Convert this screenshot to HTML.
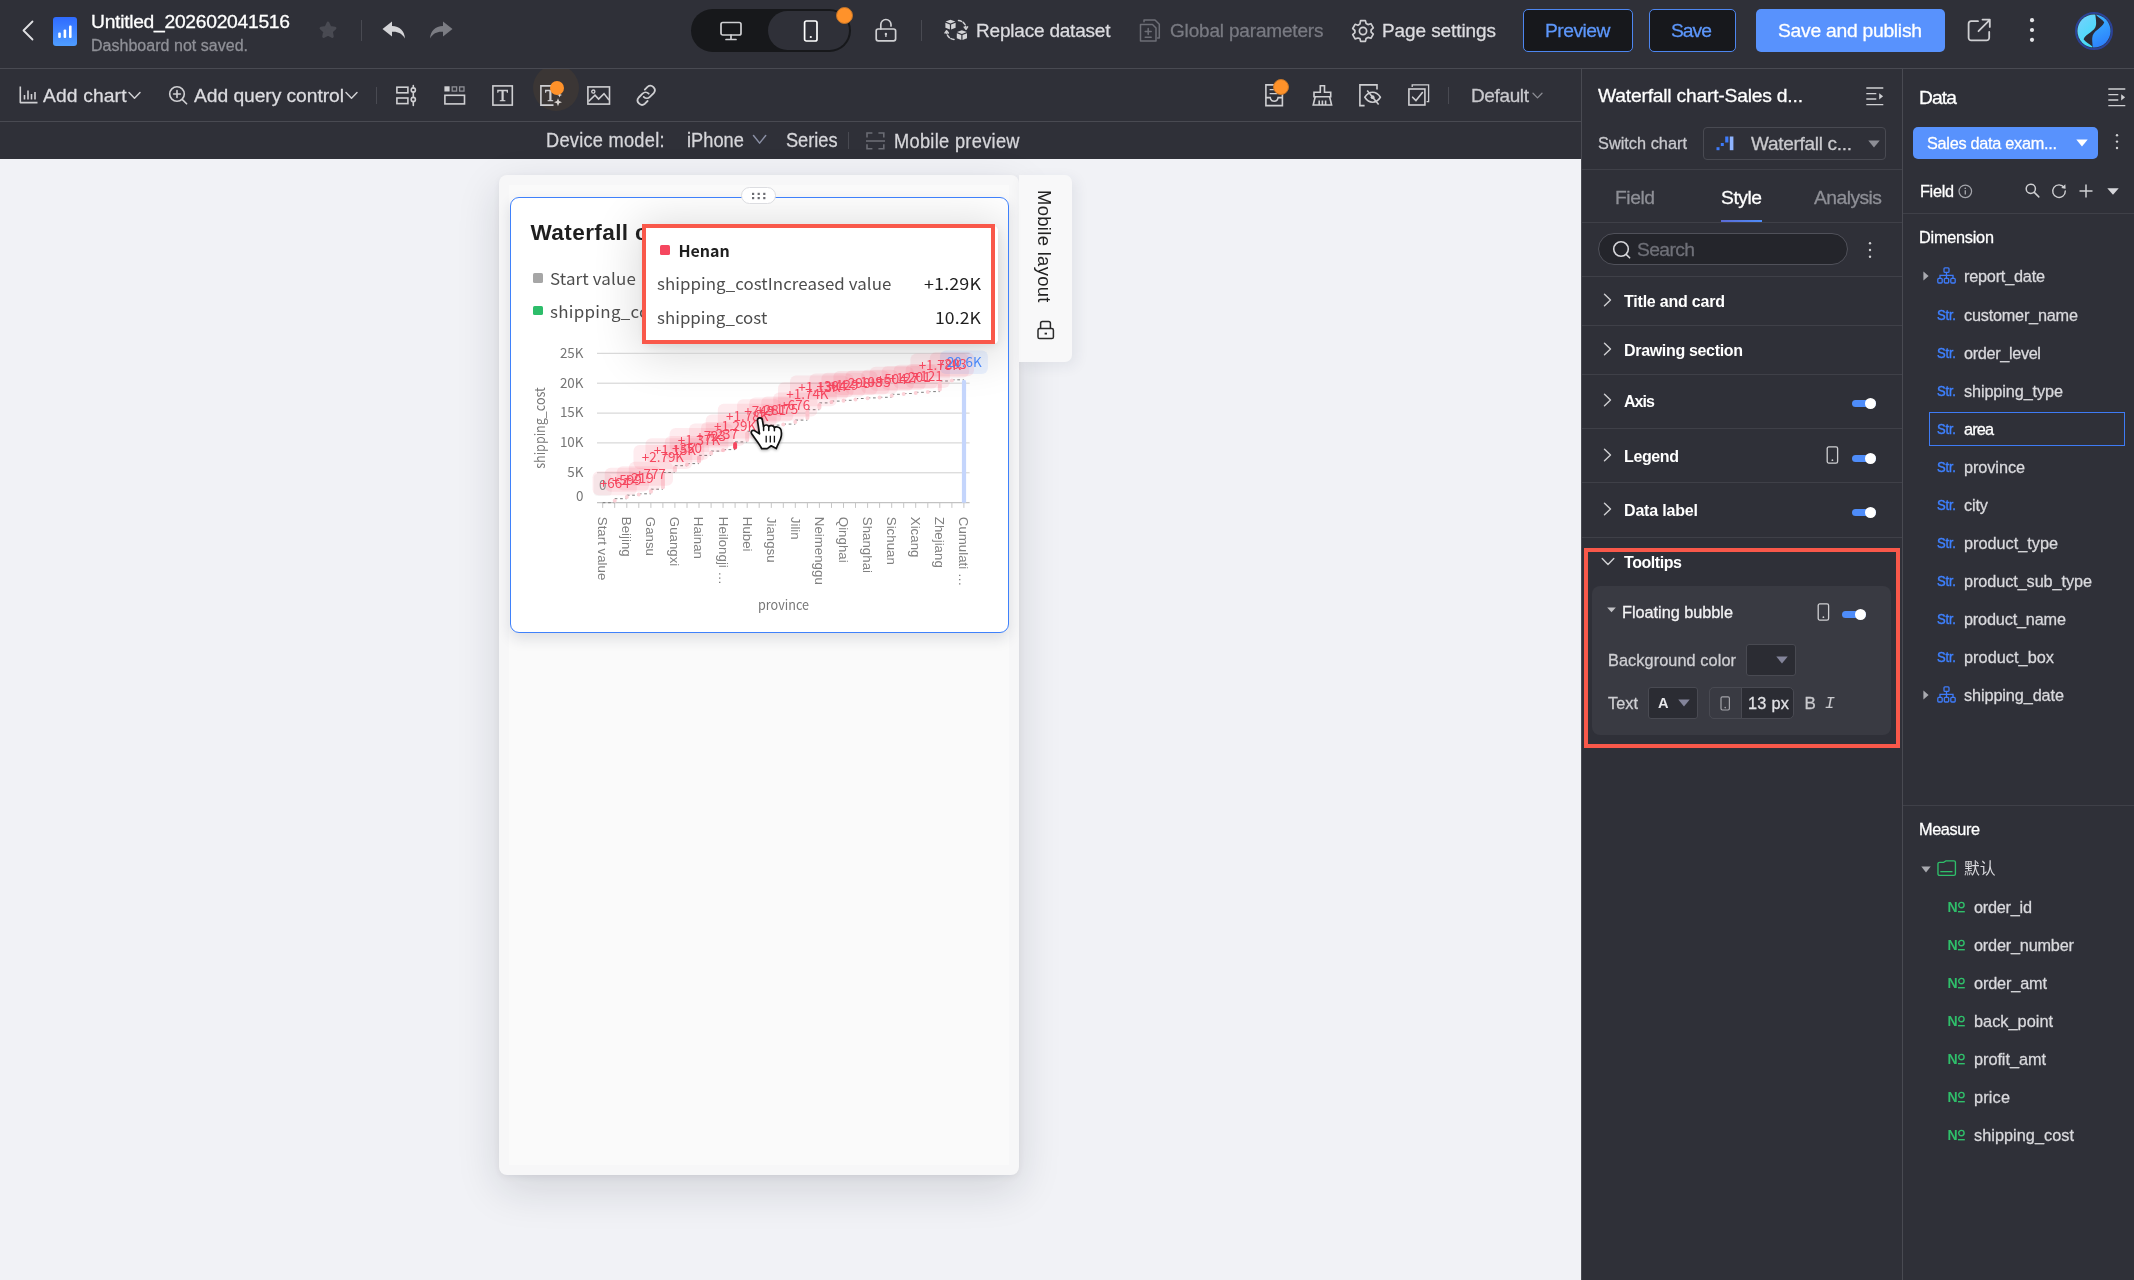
<!DOCTYPE html><html lang="en"><head><meta charset="utf-8"><title>Dashboard editor</title><style>
*{box-sizing:border-box;margin:0;padding:0}
body{opacity:.999}
html,body{width:2134px;height:1280px;overflow:hidden;background:#2f3038;font-family:"Liberation Sans","Noto Sans CJK SC",sans-serif}
.a{position:absolute}
.t{position:absolute;white-space:nowrap;-webkit-text-stroke-width:.28px}
svg{position:absolute;overflow:visible}
.ic{fill:none;stroke:#cfcfd2;stroke-width:1.7;stroke-linecap:round;stroke-linejoin:round}
.hl{position:absolute;height:1px;background:#494a52}
.vl{position:absolute;width:1px;background:#494a52}
.tg{position:absolute;width:24px;height:7px;border-radius:4px;background:#4e8cf9}
.tg:after{content:"";position:absolute;right:0;top:-2px;width:11px;height:11px;border-radius:6px;background:#fff}

</style></head><body>
<div class="a" style="left:0;top:0;width:2134px;height:1280px;background:#2f3038"></div>
<div class="a" style="left:0;top:159px;width:1581px;height:1121px;background:#f1f2f6"></div>
<div class="hl" style="left:0;top:68px;width:2134px"></div>
<div class="hl" style="left:0;top:121px;width:1581px"></div>
<div class="vl" style="left:1581px;top:69px;height:1211px"></div>
<div class="vl" style="left:1902px;top:69px;height:1211px"></div>
<svg style="left:20px;top:18px" width="16" height="26" viewBox="0 0 16 26"><path class="ic" style="stroke:#e0e0e3;stroke-width:1.8" d="M12.5 3.5 L3.5 12.5 L12.5 21.5"/></svg>
<div class="a" style="left:53px;top:17px;width:24px;height:29px;border-radius:3px;background:linear-gradient(180deg,#2f6bff 0%,#4f9dff 100%)"></div>
<svg style="left:53px;top:17px" width="24" height="29" viewBox="0 0 24 29"><g fill="#fff"><rect x="5.2" y="15.5" width="2.6" height="5.5" rx="1"/><rect x="10.6" y="12.5" width="2.6" height="8.5" rx="1"/><rect x="16" y="8.5" width="2.6" height="12.5" rx="1"/></g></svg>
<span class="t" style="left:91px;top:8.7px;font-size:18.431px;line-height:26px;color:#ffffff;letter-spacing:-0.280px;transform-origin:0 50%;transform:scaleX(1.0471);">Untitled_202602041516</span>
<span class="t" style="left:91px;top:34.5px;font-size:16px;line-height:22px;color:#8f9097;letter-spacing:0.024px;">Dashboard not saved.</span>
<svg style="left:318px;top:20px" width="20" height="20" viewBox="0 0 24 24"><path fill="#494a52" d="M12 3.6l2.5 5.4 5.9.8-4.3 4.1 1.1 5.9L12 17l-5.2 2.8 1.1-5.9-4.3-4.1 5.9-.8z" stroke="#494a52" stroke-width="3.4" stroke-linejoin="round"/></svg>
<div class="vl" style="left:361px;top:20px;height:21px"></div>
<svg style="left:381px;top:20px" width="26" height="20" viewBox="0 0 26 20"><path fill="#d4d4d7" d="M11 1.5 L1.5 9 L11 16.5 V11.8 C16.5 11.3 20.8 13.2 24 18.5 C23.4 11 18.8 6.4 11 6.1 Z"/></svg>
<svg style="left:428px;top:20px" width="26" height="20" viewBox="0 0 26 20"><path fill="#7b7c83" d="M15 1.5 L24.5 9 L15 16.5 V11.8 C9.5 11.3 5.2 13.2 2 18.5 C2.6 11 7.2 6.4 15 6.1 Z"/></svg>
<div class="a" style="left:691px;top:9px;width:160px;height:43px;border-radius:22px;background:#17181b"></div>
<div class="a" style="left:768px;top:11px;width:81px;height:39px;border-radius:20px;background:#2f3038"></div>
<svg style="left:720px;top:21px" width="22" height="20" viewBox="0 0 22 20"><rect class="ic" x="1" y="1.5" width="20" height="12.5" rx="1.8"/><path class="ic" d="M11 14v4.2M6 18.5h10"/></svg>
<svg style="left:803px;top:20px" width="16" height="22" viewBox="0 0 16 22"><rect class="ic" style="stroke:#fff" x="1.6" y="1" width="12.4" height="20" rx="1.8"/><circle cx="7.8" cy="17" r="1.1" fill="#fff"/></svg>
<div class="a" style="left:836px;top:7px;width:17px;height:17px;border-radius:9px;background:#ff922a;border:1.5px solid #c27429"></div>
<svg style="left:875px;top:18px" width="22" height="24" viewBox="0 0 22 24"><rect class="ic" x="1.2" y="11" width="19.4" height="11.8" rx="2"/><path class="ic" d="M5.8 11V6.6a5.1 5.1 0 0 1 10.2 0V8"/><circle cx="10.9" cy="16" r="1.2" fill="#cfcfd2"/><path d="M10.9 16v2.4" class="ic" style="stroke-width:1.4"/></svg>
<div class="vl" style="left:921px;top:20px;height:21px"></div>
<svg style="left:945px;top:19px" width="23" height="22" viewBox="0 0 23 22"><g fill="#d4d4d7"><path d="M5.5 0.8 L10.4 2.6 L5.5 4.5 L0.6 2.6Z"/><path d="M0.4 3.8 L4.9 5.6 V10.6 L0.4 8.8Z"/><path d="M6.1 5.6 L10.6 3.8 V8.8 L6.1 10.6Z"/><path d="M16.9 11.2 L21.8 13 L16.9 14.9 L12 13Z"/><path d="M11.8 14.2 L16.3 16 V21 L11.8 19.2Z"/><path d="M17.5 16 L22 14.2 V19.2 L17.5 21Z"/></g><path class="ic" style="stroke-width:1.5;stroke-dasharray:3.2 1.8" d="M13.5 1.5 C18 2 20.8 5 21 9.5"/><path class="ic" style="stroke-width:1.5" d="M19.2 8 L21 10.3 L22.6 7.9"/><path class="ic" style="stroke-width:1.5;stroke-dasharray:3.2 1.8" d="M9 20.5 C4.6 20 1.8 17 1.6 12.6"/><path class="ic" style="stroke-width:1.5" d="M0 14 L1.6 11.8 L3.4 14"/></svg>
<span class="t" style="left:975.5px;top:18.7px;font-size:18.145px;line-height:25px;color:#dcdce0;letter-spacing:-0.182px;transform-origin:0 50%;transform:scaleX(1.0471);">Replace dataset</span>
<svg style="left:1139px;top:18px" width="22" height="24" viewBox="0 0 22 24"><g class="ic" style="stroke:#6d6e76;stroke-width:1.5"><path d="M1.5 6.5 H13.5 L17 10 V23 H1.5Z" style="stroke-linejoin:round"/><path d="M5 3.8V2H16l4.3 4.3V20h-1.8"/><path d="M9.2 10.5v6M6.2 13.5h6M6.2 19.3h6"/></g></svg>
<span class="t" style="left:1169.5px;top:18.7px;font-size:18.145px;line-height:25px;color:#797a82;letter-spacing:-0.157px;transform-origin:0 50%;transform:scaleX(1.0471);">Global parameters</span>
<svg style="left:1351px;top:19px" width="24" height="24" viewBox="0 0 24 24"><g class="ic" style="stroke-width:1.7"><path d="M9.6 2.2h4.8l.7 2.9 1.9 1.1 2.9-.9 2.4 4.2-2.2 2v2.2l2.2 2-2.4 4.2-2.9-.9-1.9 1.1-.7 2.9H9.6l-.7-2.9L7 19.6l-2.9.9-2.4-4.2 2.2-2v-2.2l-2.2-2 2.4-4.2 2.9.9 1.9-1.1z" transform="translate(0 -0.6)"/><circle cx="12" cy="12" r="3.6"/></g></svg>
<span class="t" style="left:1382px;top:18.7px;font-size:18.145px;line-height:25px;color:#dcdce0;letter-spacing:-0.081px;transform-origin:0 50%;transform:scaleX(1.0471);">Page settings</span>
<div class="a" style="left:1523px;top:9px;width:110px;height:43px;border-radius:5px;background:#17181c;border:1px solid #4d86f0"></div>
<span class="t" style="left:1544.5px;top:18.2px;font-size:18.431px;line-height:26px;color:#5d97fb;letter-spacing:-0.496px;transform-origin:0 50%;transform:scaleX(1.0471);">Preview</span>
<div class="a" style="left:1649px;top:9px;width:86.5px;height:43px;border-radius:5px;background:#17181c;border:1px solid #4d86f0"></div>
<span class="t" style="left:1671px;top:18.2px;font-size:18.431px;line-height:26px;color:#5d97fb;letter-spacing:-0.948px;transform-origin:0 50%;transform:scaleX(1.0471);">Save</span>
<div class="a" style="left:1756px;top:9px;width:189px;height:43px;border-radius:5px;background:#5892fd"></div>
<span class="t" style="left:1778px;top:18.2px;font-size:18.431px;line-height:26px;color:#ffffff;letter-spacing:-0.255px;transform-origin:0 50%;transform:scaleX(1.0471);">Save and publish</span>
<svg style="left:1967px;top:18px" width="25" height="24" viewBox="0 0 25 24"><g class="ic" style="stroke-width:1.8"><path d="M11 3.2H4.2a2.6 2.6 0 0 0-2.6 2.6v14a2.6 2.6 0 0 0 2.6 2.6h15.4a2.6 2.6 0 0 0 2.6-2.6V14"/><path d="M11.5 13.2 L22.5 2.2M15.5 1.6h7.3v7.3"/></g></svg>
<svg style="left:2027px;top:16px" width="10" height="28" viewBox="0 0 10 28"><g fill="#e4e4e7"><circle cx="5" cy="4.2" r="2.1"/><circle cx="5" cy="14" r="2.1"/><circle cx="5" cy="23.8" r="2.1"/></g></svg>
<svg style="left:2075px;top:11.5px" width="38" height="38" viewBox="0 0 38 38"><defs><linearGradient id="avl" x1="0" y1="0" x2="0.6" y2="1"><stop offset="0" stop-color="#7fd0ff"/><stop offset="1" stop-color="#3fdcf7"/></linearGradient><linearGradient id="avr" x1="0.3" y1="0" x2="0.6" y2="1"><stop offset="0" stop-color="#3cb8ff"/><stop offset="1" stop-color="#2a78fb"/></linearGradient><clipPath id="avc"><circle cx="19" cy="19" r="16.6"/></clipPath></defs><circle cx="19" cy="19" r="18" fill="#2f3038" stroke="#2b4296" stroke-width="2"/><g clip-path="url(#avc)"><rect x="0" y="0" width="38" height="38" fill="#2b2c36"/><path fill="url(#avl)" d="M20 0 C20.5 5 21.5 9 21 13 C20.5 19.5 10.5 21.5 8.6 27.2 C10 29.5 14 31.5 17.4 34.5 L17 38 H0 V0Z"/><path fill="url(#avr)" d="M20.6 2.2 C24 6.5 28.5 8 29.2 10.6 C27 16.5 17.6 18.5 17.2 26.2 C17 29.5 17.8 33 17.8 38 H38 V0 H20.6Z"/></g></svg>
<svg style="left:19px;top:86px" width="19" height="18" viewBox="0 0 19 18"><g class="ic" style="stroke-width:1.6;stroke-linecap:butt"><path d="M1.3 0.5V16.6H18.5" /><path d="M5.5 13.5v-4.5M9 13.5V4.5M12.5 13.5V8M16 13.5V6"/></g></svg>
<span class="t" style="left:43px;top:83.2px;font-size:18.431px;line-height:26px;color:#dcdce0;letter-spacing:0.111px;transform-origin:0 50%;transform:scaleX(1.0471);">Add chart</span>
<svg style="left:128px;top:91px" width="13" height="9" viewBox="0 0 13 9"><path class="ic" style="stroke-width:1.5" d="M1 1.5l5.5 5.7L12 1.5"/></svg>
<svg style="left:168px;top:85px" width="20" height="20" viewBox="0 0 20 20"><g class="ic" style="stroke-width:1.6"><circle cx="9" cy="9" r="7.3"/><path d="M14.4 14.6L18.6 18.8M9 5.6v6.8M5.6 9h6.8"/></g></svg>
<span class="t" style="left:194px;top:83.2px;font-size:18.431px;line-height:26px;color:#dcdce0;letter-spacing:-0.071px;transform-origin:0 50%;transform:scaleX(1.0471);">Add query control</span>
<svg style="left:345px;top:91px" width="13" height="9" viewBox="0 0 13 9"><path class="ic" style="stroke-width:1.5" d="M1 1.5l5.5 5.7L12 1.5"/></svg>
<div class="vl" style="left:376px;top:87px;height:17px"></div>
<svg style="left:396px;top:85px" width="21" height="21" viewBox="0 0 21 21"><g class="ic" style="stroke-width:1.6;stroke-linejoin:miter"><rect x="0.9" y="2.2" width="11" height="5.6"/><rect x="0.9" y="13" width="11" height="5.6"/><path d="M17.3 0.5V3M17.3 7V12.4M17.3 16.6V20.5"/><circle cx="17.3" cy="5" r="2.1"/><circle cx="17.3" cy="14.5" r="2.1"/></g></svg>
<svg style="left:444px;top:86px" width="22" height="19" viewBox="0 0 22 19"><rect x="0.4" y="0.3" width="5.2" height="5.2" fill="#cfcfd2"/><rect x="8.2" y="0.9" width="4.4" height="4.2" fill="none" stroke="#8e8f95" stroke-width="1.3"/><rect x="15.6" y="0.9" width="4.4" height="4.2" fill="none" stroke="#8e8f95" stroke-width="1.3"/><rect class="ic" style="stroke-width:1.6;stroke-linejoin:miter" x="0.9" y="9.3" width="19.6" height="8.6"/></svg>
<svg style="left:492px;top:85px" width="21" height="21" viewBox="0 0 21 21"><rect class="ic" style="stroke-width:1.6;stroke-linejoin:miter" x="0.9" y="0.9" width="19.4" height="19.2"/><path fill="#cfcfd2" d="M5.2 4.8h10.8v3h-1.1l-.4-1.6h-2.8v8.7l1.7.3v1H7.8v-1l1.7-.3V6.2H6.7l-.4 1.6H5.2z"/></svg>
<div class="a" style="left:533px;top:65px;width:46px;height:46px;border-radius:23px;background:#3b3635;clip-path:inset(4px 0 0 0)"></div>
<svg style="left:540px;top:85px" width="23" height="22" viewBox="0 0 23 22"><path class="ic" style="stroke-width:1.6;stroke-linejoin:miter;stroke-linecap:butt" d="M14 0.9H0.9V20.1H13.5"/><path fill="#cfcfd2" d="M5 4.8h10.8v3h-1.1l-.4-1.6h-2.8v8.7l1.7.3v1H7.6v-1l1.7-.3V6.2H6.5l-.4 1.6H5z"/><path fill="#d9d4d0" d="M18 13.2l1.1 2.9 2.9 1.1-2.9 1.1L18 21.2l-1.1-2.9-2.9-1.1 2.9-1.1zM19.6 7.6l.7 1.7 1.7.7-1.7.7-.7 1.7-.7-1.7-1.7-.7 1.7-.7z"/></svg>
<div class="a" style="left:550px;top:81px;width:13.5px;height:13.5px;border-radius:7px;background:#ff922a"></div>
<svg style="left:587px;top:86px" width="24" height="19" viewBox="0 0 24 19"><g class="ic" style="stroke-width:1.6;stroke-linejoin:miter"><rect x="0.9" y="0.9" width="21.6" height="17.2"/><circle cx="6.3" cy="5.6" r="1.6" style="stroke-width:1.3"/><path d="M1.5 15.5L8 9.2l3.6 3.9L17 7.6l5 6.4" style="stroke-linecap:butt"/></g></svg>
<svg style="left:635px;top:84px" width="23" height="23" viewBox="0 0 23 23"><g class="ic" style="stroke-width:1.8"><path d="M9.8 5.6l2.7-2.7a4.4 4.4 0 0 1 6.2 6.2l-3.8 3.8a4.4 4.4 0 0 1-6.2 0"/><path d="M12.6 17l-2.7 2.7a4.4 4.4 0 0 1-6.2-6.2l3.8-3.8a4.4 4.4 0 0 1 6.2 0" /></g></svg>
<svg style="left:1265px;top:84px" width="19" height="23" viewBox="0 0 19 23"><g class="ic" style="stroke-width:1.6;stroke-linejoin:miter;stroke-linecap:butt"><path d="M0.9 0.9H17.4V21.6H0.9Z"/><path d="M0.9 13.6H5.2C5.6 16 7.2 17.2 9.1 17.2S12.7 16 13.1 13.6H17.4"/><path d="M4.6 5.6h8M4.6 9.6h8" style="stroke-width:1.3"/></g></svg>
<div class="a" style="left:1273px;top:79px;width:16px;height:16px;border-radius:8px;background:#ff922a;border:1.5px solid #c57528"></div>
<svg style="left:1312px;top:85px" width="21" height="21" viewBox="0 0 21 21"><g class="ic" style="stroke-width:1.6;stroke-linejoin:miter;stroke-linecap:butt"><path d="M8.3 0.8h4.2v6.4h6.2v4.6H2v-4.6h6.3z"/><path d="M3.2 11.8L1.2 20h18.4l-2-8.2M7.2 20v-4.6M10.4 20v-4.6M13.6 20v-4.6"/></g></svg>
<svg style="left:1359px;top:84px" width="23" height="23" viewBox="0 0 23 23"><g class="ic" style="stroke-width:1.6;stroke-linejoin:miter;stroke-linecap:butt"><path d="M18 5.4V0.9H0.9V21.6H5.6"/><path d="M5.8 13.2C8 9.8 10.6 8.2 13.6 8.2s5.6 1.6 7.8 5c-2.2 3.4-4.8 5-7.8 5s-5.6-1.6-7.8-5z" style="stroke-linejoin:round"/><circle cx="13.6" cy="13.2" r="1.9" fill="#cfcfd2" stroke="none"/><path d="M8.2 6.6L19.6 20.4"/></g></svg>
<svg style="left:1408px;top:84px" width="22" height="22" viewBox="0 0 22 22"><g class="ic" style="stroke-width:1.6;stroke-linejoin:miter;stroke-linecap:butt"><rect x="0.9" y="5" width="16" height="16"/><path d="M4.2 3V0.9H20.6V17.6H18.6" style="stroke-width:1.3"/><path d="M4.6 13.2l3.4 3.4 6.4-8" style="stroke-linecap:round;stroke-linejoin:round"/></g></svg>
<div class="vl" style="left:1448px;top:87px;height:17px"></div>
<span class="t" style="left:1470.5px;top:83.7px;font-size:18.145px;line-height:25px;color:#c8c8cc;letter-spacing:-0.341px;transform-origin:0 50%;transform:scaleX(1.0471);">Default</span>
<svg style="left:1532px;top:92px" width="11" height="8" viewBox="0 0 11 8"><path class="ic" style="stroke:#8b8c93;stroke-width:1.3" d="M1 1.3l4.5 4.6L10 1.3"/></svg>
<span class="t" style="left:546px;top:127.4px;font-size:19.6px;line-height:27px;color:#d6d6da;letter-spacing:0.272px;transform-origin:0 50%;transform:scaleX(0.93);">Device model:</span>
<span class="t" style="left:687.3px;top:127.4px;font-size:19.6px;line-height:27px;color:#d6d6da;letter-spacing:0.033px;transform-origin:0 50%;transform:scaleX(0.93);">iPhone</span>
<svg style="left:752.4px;top:134.4px" width="16" height="11" viewBox="0 0 16 11"><path class="ic" style="stroke:#8a8fa4;stroke-width:1.5" d="M1.5 1.5l6.1 7.6 6.1-7.6"/></svg>
<span class="t" style="left:786px;top:126.6px;font-size:19.6px;line-height:27px;color:#d6d6da;letter-spacing:-0.034px;transform-origin:0 50%;transform:scaleX(0.93);">Series</span>
<div class="vl" style="left:848px;top:132px;height:17px"></div>
<svg style="left:866px;top:132px" width="19" height="18" viewBox="0 0 19 18"><g class="ic" style="stroke:#6b6c74;stroke-width:1.6;stroke-linecap:butt;stroke-linejoin:miter"><path d="M1 5.6V1H6.4M12.4 1H17.8V5.6M17.8 12.2V16.8H12.4M6.4 16.8H1V12.2"/><path d="M0 9H19"/></g></svg>
<span class="t" style="left:894px;top:128.0px;font-size:19.6px;line-height:27px;color:#d6d6da;letter-spacing:0.328px;transform-origin:0 50%;transform:scaleX(0.93);">Mobile preview</span>
<span class="t" style="left:1598px;top:83.2px;font-size:18.431px;line-height:26px;color:#ffffff;letter-spacing:-0.209px;transform-origin:0 50%;transform:scaleX(1.0471);">Waterfall chart-Sales d...</span>
<svg style="left:1866px;top:87px" width="19" height="18" viewBox="0 0 19 18"><g class="ic" style="stroke-width:1.3;stroke-linecap:butt"><path d="M0.3 1H17.3M0.3 6.6H10.3M0.3 12H10.3M0.3 17.6H17.3"/></g><path fill="#cfcfd2" d="M13.2 6.2l3.9 3.1-3.9 3.1z"/></svg>
<span class="t" style="left:1598px;top:132.0px;font-size:16.3px;line-height:23px;color:#c9c9cd;letter-spacing:0.028px;">Switch chart</span>
<div class="a" style="left:1703px;top:127px;width:183px;height:33px;border-radius:4px;border:1px solid #494a52"></div>
<svg style="left:1716px;top:135px" width="18" height="16" viewBox="0 0 18 16"><rect x="0.5" y="12.2" width="3" height="3" fill="#3e7bfa"/><rect x="4.8" y="8" width="3" height="3" fill="#3e7bfa"/><rect x="9.2" y="1.5" width="3.2" height="6" fill="#3e7bfa"/><rect x="13.8" y="1.5" width="3.6" height="13.7" fill="#8fb4ff"/></svg>
<span class="t" style="left:1751px;top:131.7px;font-size:18.145px;line-height:25px;color:#c9c9cd;letter-spacing:-0.276px;transform-origin:0 50%;transform:scaleX(1.0471);">Waterfall c...</span>
<svg style="left:1868px;top:140px" width="12" height="8" viewBox="0 0 12 8"><path fill="#8d8e96" d="M0.3 0.6h11.4L6 7.4z"/></svg>
<div class="hl" style="left:1582px;top:169px;width:320px;background:#3f4048"></div>
<span class="t" style="left:1615px;top:184.7px;font-size:18.431px;line-height:26px;color:#8e8f96;letter-spacing:-0.434px;transform-origin:0 50%;transform:scaleX(1.0471);">Field</span>
<span class="t" style="left:1721px;top:184.7px;font-size:18.431px;line-height:26px;color:#ffffff;letter-spacing:-0.453px;transform-origin:0 50%;transform:scaleX(1.0471);">Style</span>
<span class="t" style="left:1814px;top:184.7px;font-size:18.431px;line-height:26px;color:#8e8f96;letter-spacing:-0.524px;transform-origin:0 50%;transform:scaleX(1.0471);">Analysis</span>
<div class="a" style="left:1721px;top:220px;width:41px;height:2.5px;background:linear-gradient(90deg,#5b6bd6,#4e8cf9)"></div>
<div class="hl" style="left:1582px;top:222px;width:320px;background:#3f4048"></div>
<div class="a" style="left:1598px;top:233px;width:250px;height:32px;border-radius:16px;border:1px solid #50515a;background:#24252b"></div>
<svg style="left:1612px;top:240px" width="20" height="20" viewBox="0 0 20 20"><g class="ic" style="stroke:#d6d6da;stroke-width:1.6"><circle cx="9" cy="9" r="7.3"/><path d="M14.4 14.6L17.6 17.8"/></g></svg>
<span class="t" style="left:1637px;top:236.7px;font-size:18.431px;line-height:26px;color:#6f7078;letter-spacing:-0.597px;transform-origin:0 50%;transform:scaleX(1.0471);">Search</span>
<svg style="left:1867px;top:241px" width="6" height="18" viewBox="0 0 6 18"><g fill="#cfcfd2"><circle cx="3" cy="2.2" r="1.2"/><circle cx="3" cy="9" r="1.2"/><circle cx="3" cy="15.8" r="1.2"/></g></svg>
<div class="hl" style="left:1582px;top:276px;width:320px;background:#3f4048"></div>
<div class="hl" style="left:1582px;top:325px;width:320px;background:#3f4048"></div>
<div class="hl" style="left:1582px;top:374px;width:320px;background:#3f4048"></div>
<div class="hl" style="left:1582px;top:428px;width:320px;background:#3f4048"></div>
<div class="hl" style="left:1582px;top:482px;width:320px;background:#3f4048"></div>
<div class="hl" style="left:1582px;top:537px;width:320px;background:#3f4048"></div>
<svg style="left:1603px;top:293px" width="9" height="14" viewBox="0 0 9 14"><path class="ic" style="stroke-width:1.4" d="M1.5 1.2l6 5.8-6 5.8"/></svg>
<span class="t" style="left:1624px;top:290.8px;font-size:16px;line-height:22px;color:#ffffff;font-weight:700;-webkit-text-stroke-width:0;letter-spacing:-0.210px;">Title and card</span>
<svg style="left:1603px;top:342px" width="9" height="14" viewBox="0 0 9 14"><path class="ic" style="stroke-width:1.4" d="M1.5 1.2l6 5.8-6 5.8"/></svg>
<span class="t" style="left:1624px;top:339.8px;font-size:16px;line-height:22px;color:#ffffff;font-weight:700;-webkit-text-stroke-width:0;letter-spacing:-0.327px;">Drawing section</span>
<svg style="left:1603px;top:393px" width="9" height="14" viewBox="0 0 9 14"><path class="ic" style="stroke-width:1.4" d="M1.5 1.2l6 5.8-6 5.8"/></svg>
<span class="t" style="left:1624px;top:390.8px;font-size:16px;line-height:22px;color:#ffffff;font-weight:700;-webkit-text-stroke-width:0;letter-spacing:-0.932px;">Axis</span>
<div class="tg" style="left:1852px;top:399.5px"></div>
<svg style="left:1603px;top:448px" width="9" height="14" viewBox="0 0 9 14"><path class="ic" style="stroke-width:1.4" d="M1.5 1.2l6 5.8-6 5.8"/></svg>
<span class="t" style="left:1624px;top:445.8px;font-size:16px;line-height:22px;color:#ffffff;font-weight:700;-webkit-text-stroke-width:0;letter-spacing:-0.378px;">Legend</span>
<div class="tg" style="left:1852px;top:454.5px"></div>
<svg style="left:1826px;top:446px" width="13" height="18" viewBox="0 0 13 18"><rect class="ic" style="stroke:#cfcfd2;stroke-width:1.3" x="1.2" y="0.9" width="10.4" height="16.2" rx="1.6"/><circle cx="6.4" cy="14.2" r="0.9" fill="#cfcfd2"/></svg>
<svg style="left:1603px;top:502px" width="9" height="14" viewBox="0 0 9 14"><path class="ic" style="stroke-width:1.4" d="M1.5 1.2l6 5.8-6 5.8"/></svg>
<span class="t" style="left:1624px;top:499.8px;font-size:16px;line-height:22px;color:#ffffff;font-weight:700;-webkit-text-stroke-width:0;letter-spacing:-0.177px;">Data label</span>
<div class="tg" style="left:1852px;top:508.5px"></div>
<div class="a" style="left:1592px;top:586px;width:299px;height:149px;border-radius:8px;background:#393a42"></div>
<svg style="left:1601px;top:557px" width="14" height="9" viewBox="0 0 14 9"><path class="ic" style="stroke-width:1.4" d="M1.2 1.5l5.8 6 5.8-6"/></svg>
<span class="t" style="left:1624px;top:551.8px;font-size:16px;line-height:22px;color:#ffffff;font-weight:700;-webkit-text-stroke-width:0;letter-spacing:-0.433px;">Tooltips</span>
<svg style="left:1607px;top:607px" width="9" height="6" viewBox="0 0 9 6"><path fill="#c2c2c6" d="M0.2 0.5h8.6L4.5 5.2z"/></svg>
<span class="t" style="left:1622px;top:600.5px;font-size:16.3px;line-height:23px;color:#f2f2f4;letter-spacing:-0.025px;">Floating bubble</span>
<svg style="left:1817px;top:603px" width="13" height="18" viewBox="0 0 13 18"><rect class="ic" style="stroke:#cfcfd2;stroke-width:1.3" x="1.2" y="0.9" width="10.4" height="16.2" rx="1.6"/><circle cx="6.4" cy="14.2" r="0.9" fill="#cfcfd2"/></svg>
<div class="tg" style="left:1842px;top:610.7px"></div>
<span class="t" style="left:1608px;top:649.0px;font-size:16.3px;line-height:23px;color:#cfcfd3;letter-spacing:0.085px;">Background color</span>
<div class="a" style="left:1746px;top:644px;width:50px;height:32px;border-radius:3px;border:1px solid #494a52;background:#2b2c33"></div>
<svg style="left:1776px;top:656px" width="12" height="8" viewBox="0 0 12 8"><path fill="#83849a" d="M0.3 0.6h11.4L6 7.4z"/></svg>
<span class="t" style="left:1608px;top:691.5px;font-size:16.3px;line-height:23px;color:#cfcfd3;letter-spacing:0.047px;">Text</span>
<div class="a" style="left:1648px;top:687px;width:50px;height:32px;border-radius:3px;border:1px solid #494a52;background:#2b2c33"></div>
<span class="t" style="left:1658px;top:693.0px;font-size:14.6px;line-height:20px;color:#e8e8eb;font-weight:700;-webkit-text-stroke-width:0;-webkit-text-stroke-width:0;">A</span>
<svg style="left:1678px;top:699px" width="12" height="8" viewBox="0 0 12 8"><path fill="#83849a" d="M0.3 0.6h11.4L6 7.4z"/></svg>
<div class="a" style="left:1709px;top:687px;width:85px;height:32px;border-radius:5px;border:1px solid #494a52;background:#2b2c33"></div>
<div class="a" style="left:1709px;top:687px;width:33px;height:32px;border-radius:5px 0 0 5px;border:1px solid #494a52;background:#393a42"></div>
<svg style="left:1720px;top:696px" width="11" height="15" viewBox="0 0 11 15"><rect class="ic" style="stroke:#a2a2a8;stroke-width:1.2" x="1" y="0.8" width="8.4" height="13.2" rx="1.4"/><circle cx="5.2" cy="11.6" r="0.8" fill="#a2a2a8"/></svg>
<span class="t" style="left:1748px;top:692.0px;font-size:16.3px;line-height:23px;color:#e2e2e6;letter-spacing:0.289px;">13 px</span>
<span class="t" style="left:1804.4px;top:691.5px;font-size:17px;line-height:24px;color:#c9c9cd;">B</span>
<span class="t" style="left:1824.8px;top:691.5px;font-size:17px;line-height:24px;color:#c9c9cd;-webkit-text-stroke-width:0;font-family:&quot;Liberation Mono&quot;,monospace;font-style:italic;">I</span>
<div class="a" style="left:1584px;top:548px;width:316px;height:200px;border:4.5px solid #f9584a"></div>
<span class="t" style="left:1919px;top:84.7px;font-size:18.336px;line-height:26px;color:#ffffff;letter-spacing:-0.809px;transform-origin:0 50%;transform:scaleX(1.0471);">Data</span>
<svg style="left:2108px;top:88px" width="19" height="18" viewBox="0 0 19 18"><g class="ic" style="stroke-width:1.3;stroke-linecap:butt"><path d="M0.3 1H17.3M0.3 6.6H10.3M0.3 12H10.3M0.3 17.6H17.3"/></g><path fill="#cfcfd2" d="M13.2 6.2l3.9 3.1-3.9 3.1z"/></svg>
<div class="a" style="left:1913px;top:127px;width:185px;height:32px;border-radius:5px;background:#5892fd"></div>
<span class="t" style="left:1927px;top:132.0px;font-size:16.3px;line-height:23px;color:#ffffff;letter-spacing:-0.286px;">Sales data exam...</span>
<svg style="left:2076px;top:139px" width="12" height="8" viewBox="0 0 12 8"><path fill="#fff" d="M0.3 0.6h11.4L6 7.4z"/></svg>
<svg style="left:2114px;top:133px" width="6" height="18" viewBox="0 0 6 18"><g fill="#cfcfd2"><circle cx="3" cy="2.2" r="1.2"/><circle cx="3" cy="8.6" r="1.2"/><circle cx="3" cy="15" r="1.2"/></g></svg>
<span class="t" style="left:1920px;top:179.5px;font-size:16.3px;line-height:23px;color:#ffffff;letter-spacing:-0.324px;">Field</span>
<svg style="left:1958px;top:184px" width="14.6" height="14.6" viewBox="0 0 13 13"><circle cx="6.5" cy="6.5" r="5.6" fill="none" stroke="#a4a5ab" stroke-width="1.1"/><path d="M6.5 5.6v3.8" stroke="#a4a5ab" stroke-width="1.2"/><circle cx="6.5" cy="3.8" r="0.75" fill="#a4a5ab"/></svg>
<svg style="left:2025px;top:183px" width="15" height="15" viewBox="0 0 15 15"><g class="ic" style="stroke-width:1.5"><circle cx="5.8" cy="5.8" r="4.6"/><path d="M9.3 9.4L13.8 13.9"/></g></svg>
<svg style="left:2051px;top:183px" width="16" height="16" viewBox="0 0 16 16"><path class="ic" style="stroke-width:1.4" d="M13.2 4.6A6.3 6.3 0 1 0 14.3 8"/><path fill="#cfcfd2" d="M10.2 4.9l4.4 .8-.3-4.4z"/></svg>
<svg style="left:2079px;top:184px" width="14" height="14" viewBox="0 0 14 14"><path class="ic" style="stroke-width:1.5;stroke-linecap:butt" d="M7 0.5v13M0.5 7h13"/></svg>
<svg style="left:2107px;top:188px" width="12" height="7" viewBox="0 0 12 7"><path fill="#d6d6da" d="M0.3 0.3h11.4L6 6.8z"/></svg>
<div class="hl" style="left:1903px;top:213px;width:231px;background:#3f4048"></div>
<span class="t" style="left:1919px;top:225.5px;font-size:16.3px;line-height:23px;color:#ffffff;letter-spacing:-0.240px;">Dimension</span>
<div class="a" style="left:1929px;top:412px;width:196px;height:34px;border:1px solid #3e7bf5"></div>
<svg style="left:1923px;top:271px" width="6" height="10" viewBox="0 0 6 10"><path fill="#a9aab0" d="M0.4 0.4L5.6 5 0.4 9.6z"/></svg>
<svg style="left:1937px;top:267px" width="19" height="17" viewBox="0 0 19 17"><g fill="none" stroke="#3e7bfa" stroke-width="1.3"><rect x="7" y="0.8" width="5" height="4.6" rx="1"/><rect x="0.8" y="11.4" width="4.4" height="4.6" rx="1"/><rect x="7.3" y="11.4" width="4.4" height="4.6" rx="1"/><rect x="13.8" y="11.4" width="4.4" height="4.6" rx="1"/><path d="M9.5 5.4v6M3 11.4V8.4h13v3"/></g></svg>
<span class="t" style="left:1964px;top:264.5px;font-size:16.3px;line-height:23px;color:#d9d9dd;letter-spacing:-0.228px;">report_date</span>
<span class="t" style="left:1937px;top:304.0px;font-size:15.2px;line-height:21px;color:#3e80ff;letter-spacing:-0.235px;transform-origin:0 50%;transform:scaleX(0.86);-webkit-text-stroke-width:.45px;">Str.</span>
<span class="t" style="left:1964px;top:303.5px;font-size:16.3px;line-height:23px;color:#d9d9dd;letter-spacing:-0.229px;">customer_name</span>
<span class="t" style="left:1937px;top:342.0px;font-size:15.2px;line-height:21px;color:#3e80ff;letter-spacing:-0.235px;transform-origin:0 50%;transform:scaleX(0.86);-webkit-text-stroke-width:.45px;">Str.</span>
<span class="t" style="left:1964px;top:341.5px;font-size:16.3px;line-height:23px;color:#d9d9dd;letter-spacing:-0.356px;">order_level</span>
<span class="t" style="left:1937px;top:380.0px;font-size:15.2px;line-height:21px;color:#3e80ff;letter-spacing:-0.235px;transform-origin:0 50%;transform:scaleX(0.86);-webkit-text-stroke-width:.45px;">Str.</span>
<span class="t" style="left:1964px;top:379.5px;font-size:16.3px;line-height:23px;color:#d9d9dd;letter-spacing:-0.124px;">shipping_type</span>
<span class="t" style="left:1937px;top:418.0px;font-size:15.2px;line-height:21px;color:#3e80ff;letter-spacing:-0.235px;transform-origin:0 50%;transform:scaleX(0.86);-webkit-text-stroke-width:.45px;">Str.</span>
<span class="t" style="left:1964px;top:417.5px;font-size:16.3px;line-height:23px;color:#ffffff;letter-spacing:-0.865px;">area</span>
<span class="t" style="left:1937px;top:456.0px;font-size:15.2px;line-height:21px;color:#3e80ff;letter-spacing:-0.235px;transform-origin:0 50%;transform:scaleX(0.86);-webkit-text-stroke-width:.45px;">Str.</span>
<span class="t" style="left:1964px;top:455.5px;font-size:16.3px;line-height:23px;color:#d9d9dd;letter-spacing:-0.078px;">province</span>
<span class="t" style="left:1937px;top:494.0px;font-size:15.2px;line-height:21px;color:#3e80ff;letter-spacing:-0.235px;transform-origin:0 50%;transform:scaleX(0.86);-webkit-text-stroke-width:.45px;">Str.</span>
<span class="t" style="left:1964px;top:493.5px;font-size:16.3px;line-height:23px;color:#d9d9dd;letter-spacing:-0.141px;">city</span>
<span class="t" style="left:1937px;top:532.0px;font-size:15.2px;line-height:21px;color:#3e80ff;letter-spacing:-0.235px;transform-origin:0 50%;transform:scaleX(0.86);-webkit-text-stroke-width:.45px;">Str.</span>
<span class="t" style="left:1964px;top:531.5px;font-size:16.3px;line-height:23px;color:#d9d9dd;letter-spacing:-0.013px;">product_type</span>
<span class="t" style="left:1937px;top:570.0px;font-size:15.2px;line-height:21px;color:#3e80ff;letter-spacing:-0.235px;transform-origin:0 50%;transform:scaleX(0.86);-webkit-text-stroke-width:.45px;">Str.</span>
<span class="t" style="left:1964px;top:569.5px;font-size:16.3px;line-height:23px;color:#d9d9dd;letter-spacing:-0.097px;">product_sub_type</span>
<span class="t" style="left:1937px;top:608.0px;font-size:15.2px;line-height:21px;color:#3e80ff;letter-spacing:-0.235px;transform-origin:0 50%;transform:scaleX(0.86);-webkit-text-stroke-width:.45px;">Str.</span>
<span class="t" style="left:1964px;top:607.5px;font-size:16.3px;line-height:23px;color:#d9d9dd;letter-spacing:-0.190px;">product_name</span>
<span class="t" style="left:1937px;top:646.0px;font-size:15.2px;line-height:21px;color:#3e80ff;letter-spacing:-0.235px;transform-origin:0 50%;transform:scaleX(0.86);-webkit-text-stroke-width:.45px;">Str.</span>
<span class="t" style="left:1964px;top:645.5px;font-size:16.3px;line-height:23px;color:#d9d9dd;letter-spacing:0.037px;">product_box</span>
<svg style="left:1923px;top:690px" width="6" height="10" viewBox="0 0 6 10"><path fill="#a9aab0" d="M0.4 0.4L5.6 5 0.4 9.6z"/></svg>
<svg style="left:1937px;top:686px" width="19" height="17" viewBox="0 0 19 17"><g fill="none" stroke="#3e7bfa" stroke-width="1.3"><rect x="7" y="0.8" width="5" height="4.6" rx="1"/><rect x="0.8" y="11.4" width="4.4" height="4.6" rx="1"/><rect x="7.3" y="11.4" width="4.4" height="4.6" rx="1"/><rect x="13.8" y="11.4" width="4.4" height="4.6" rx="1"/><path d="M9.5 5.4v6M3 11.4V8.4h13v3"/></g></svg>
<span class="t" style="left:1964px;top:683.5px;font-size:16.3px;line-height:23px;color:#d9d9dd;letter-spacing:-0.117px;">shipping_date</span>
<div class="hl" style="left:1903px;top:805px;width:231px;background:#3f4048"></div>
<span class="t" style="left:1919px;top:817.5px;font-size:16.3px;line-height:23px;color:#ffffff;letter-spacing:-0.393px;">Measure</span>
<svg style="left:1920.7px;top:865.6px" width="10" height="7" viewBox="0 0 10 7"><path fill="#a9aab0" d="M0.3 0.4h9.4L5 6.6z"/></svg>
<svg style="left:1936.8px;top:860.4px" width="19.4" height="16.4" viewBox="0 0 20 18" preserveAspectRatio="none"><path fill="none" stroke="#2fbf6a" stroke-width="1.4" stroke-linejoin="round" d="M1 4.2a1.6 1.6 0 0 1 1.6-1.6H7l2-1.6h8.4a1.6 1.6 0 0 1 1.6 1.6v12.8a1.6 1.6 0 0 1-1.6 1.6H2.6A1.6 1.6 0 0 1 1 15.4z"/><path d="M3.4 12.8H16" stroke="#2fbf6a" stroke-width="1.4"/></svg>
<span class="t" style="left:1964px;top:858.4px;font-size:15.8px;line-height:22px;color:#d9d9dd;letter-spacing:-0.109px;-webkit-text-stroke-width:0;">默认</span>
<span class="t" style="left:1947.6px;top:897.0px;font-size:14px;line-height:20px;color:#2fbf6a;font-weight:700;-webkit-text-stroke-width:0;-webkit-text-stroke-width:0;">N</span>
<svg style="left:1957.4px;top:900.8px" width="9" height="12" viewBox="0 0 9 12"><circle cx="4.4" cy="4.1" r="2.7" fill="none" stroke="#2fbf6a" stroke-width="1.4"/><path d="M1 10.7h6.8" stroke="#2fbf6a" stroke-width="1.4"/></svg>
<span class="t" style="left:1974px;top:895.5px;font-size:16.3px;line-height:23px;color:#d9d9dd;letter-spacing:-0.250px;">order_id</span>
<span class="t" style="left:1947.6px;top:935.0px;font-size:14px;line-height:20px;color:#2fbf6a;font-weight:700;-webkit-text-stroke-width:0;-webkit-text-stroke-width:0;">N</span>
<svg style="left:1957.4px;top:938.8px" width="9" height="12" viewBox="0 0 9 12"><circle cx="4.4" cy="4.1" r="2.7" fill="none" stroke="#2fbf6a" stroke-width="1.4"/><path d="M1 10.7h6.8" stroke="#2fbf6a" stroke-width="1.4"/></svg>
<span class="t" style="left:1974px;top:933.5px;font-size:16.3px;line-height:23px;color:#d9d9dd;letter-spacing:-0.207px;">order_number</span>
<span class="t" style="left:1947.6px;top:973.0px;font-size:14px;line-height:20px;color:#2fbf6a;font-weight:700;-webkit-text-stroke-width:0;-webkit-text-stroke-width:0;">N</span>
<svg style="left:1957.4px;top:976.8px" width="9" height="12" viewBox="0 0 9 12"><circle cx="4.4" cy="4.1" r="2.7" fill="none" stroke="#2fbf6a" stroke-width="1.4"/><path d="M1 10.7h6.8" stroke="#2fbf6a" stroke-width="1.4"/></svg>
<span class="t" style="left:1974px;top:971.5px;font-size:16.3px;line-height:23px;color:#d9d9dd;letter-spacing:-0.152px;">order_amt</span>
<span class="t" style="left:1947.6px;top:1011.0px;font-size:14px;line-height:20px;color:#2fbf6a;font-weight:700;-webkit-text-stroke-width:0;-webkit-text-stroke-width:0;">N</span>
<svg style="left:1957.4px;top:1014.8px" width="9" height="12" viewBox="0 0 9 12"><circle cx="4.4" cy="4.1" r="2.7" fill="none" stroke="#2fbf6a" stroke-width="1.4"/><path d="M1 10.7h6.8" stroke="#2fbf6a" stroke-width="1.4"/></svg>
<span class="t" style="left:1974px;top:1009.5px;font-size:16.3px;line-height:23px;color:#d9d9dd;letter-spacing:0.026px;">back_point</span>
<span class="t" style="left:1947.6px;top:1049.0px;font-size:14px;line-height:20px;color:#2fbf6a;font-weight:700;-webkit-text-stroke-width:0;-webkit-text-stroke-width:0;">N</span>
<svg style="left:1957.4px;top:1052.8px" width="9" height="12" viewBox="0 0 9 12"><circle cx="4.4" cy="4.1" r="2.7" fill="none" stroke="#2fbf6a" stroke-width="1.4"/><path d="M1 10.7h6.8" stroke="#2fbf6a" stroke-width="1.4"/></svg>
<span class="t" style="left:1974px;top:1047.5px;font-size:16.3px;line-height:23px;color:#d9d9dd;letter-spacing:-0.045px;">profit_amt</span>
<span class="t" style="left:1947.6px;top:1087.0px;font-size:14px;line-height:20px;color:#2fbf6a;font-weight:700;-webkit-text-stroke-width:0;-webkit-text-stroke-width:0;">N</span>
<svg style="left:1957.4px;top:1090.8px" width="9" height="12" viewBox="0 0 9 12"><circle cx="4.4" cy="4.1" r="2.7" fill="none" stroke="#2fbf6a" stroke-width="1.4"/><path d="M1 10.7h6.8" stroke="#2fbf6a" stroke-width="1.4"/></svg>
<span class="t" style="left:1974px;top:1085.5px;font-size:16.3px;line-height:23px;color:#d9d9dd;letter-spacing:0.176px;">price</span>
<span class="t" style="left:1947.6px;top:1125.0px;font-size:14px;line-height:20px;color:#2fbf6a;font-weight:700;-webkit-text-stroke-width:0;-webkit-text-stroke-width:0;">N</span>
<svg style="left:1957.4px;top:1128.8px" width="9" height="12" viewBox="0 0 9 12"><circle cx="4.4" cy="4.1" r="2.7" fill="none" stroke="#2fbf6a" stroke-width="1.4"/><path d="M1 10.7h6.8" stroke="#2fbf6a" stroke-width="1.4"/></svg>
<span class="t" style="left:1974px;top:1123.5px;font-size:16.3px;line-height:23px;color:#d9d9dd;letter-spacing:0.035px;">shipping_cost</span>
<div class="a" style="left:499px;top:175px;width:520px;height:1000px;border-radius:8px;background:#f7f7f8;box-shadow:0 14px 44px rgba(20,25,40,.14),0 2px 6px rgba(20,25,40,.06)"></div>
<div class="a" style="left:509px;top:185px;width:500px;height:980px;background:#fafafa"></div>
<div class="a" style="left:1019px;top:175px;width:53px;height:186.5px;border-radius:0 7px 7px 0;background:#f8f8f9;box-shadow:4px 4px 14px rgba(40,50,80,.08)"></div>
<span class="tv" style="position:absolute;white-space:nowrap;left:1035px;top:190.2px;font-size:18.4px;line-height:18.4px;letter-spacing:0.34px;color:#222;transform-origin:0 0;transform:rotate(90deg) translate(0,-100%);height:18.4px">Mobile layout</span>
<svg style="left:1037px;top:320px" width="18" height="20" viewBox="0 0 18 20"><g fill="none" stroke="#2a2a2a" stroke-width="1.5" stroke-linejoin="round"><rect x="1" y="8.6" width="15.4" height="10" rx="1.6"/><path d="M3.6 8.6V3.2a1.8 1.8 0 0 1 1.8-1.8h6.2a1.8 1.8 0 0 1 1.8 1.8v5.4" /><path d="M7.6 13.6h2.4" stroke-width="1.8"/></g></svg>
<div class="a" style="left:509.5px;top:196.5px;width:499px;height:436px;border-radius:9px;border:1.5px solid #3f81fb;background:#fff;box-shadow:0 6px 14px rgba(30,40,60,.13);overflow:hidden"><div class="a" style="left:134px;top:28px;width:353px;height:118px;border-radius:5px;box-shadow:0 4px 46px 8px rgba(0,0,0,.14),0 2px 8px rgba(0,0,0,.08)"></div></div>
<span class="t" style="left:530.5px;top:217.0px;font-size:22.6px;line-height:32px;color:#1f1f1f;font-weight:700;-webkit-text-stroke-width:0;letter-spacing:0.375px;-webkit-text-stroke-width:0;">Waterfall chart-Sales data example</span>
<div class="a" style="left:741px;top:187px;width:35px;height:17px;border-radius:9px;background:#fff;border:1px solid #dcdde1"></div>
<svg style="left:751px;top:192px" width="16" height="8" viewBox="0 0 16 8"><g fill="#6b6c72"><rect x="1" y="0.8" width="2.2" height="2.2"/><rect x="6.6" y="0.8" width="2.2" height="2.2"/><rect x="12.2" y="0.8" width="2.2" height="2.2"/><rect x="1" y="5" width="2.2" height="2.2"/><rect x="6.6" y="5" width="2.2" height="2.2"/><rect x="12.2" y="5" width="2.2" height="2.2"/></g></svg>
<div class="a" style="left:533.3px;top:273.3px;width:9.5px;height:9.5px;border-radius:1.6px;background:#a6a6a6"></div>
<span class="t" style="left:550.2px;top:266.5px;font-size:16px;line-height:22px;color:#4d4d4d;letter-spacing:0.124px;transform-origin:0 50%;transform:scaleX(1.06);-webkit-text-stroke-width:0;font-family:&quot;Noto Sans CJK SC&quot;,&quot;Liberation Sans&quot;,sans-serif;">Start value</span>
<div class="a" style="left:533.3px;top:305.5px;width:9.5px;height:9.5px;border-radius:1.6px;background:#2dbd6a"></div>
<span class="t" style="left:550.2px;top:299.5px;font-size:16px;line-height:22px;color:#4d4d4d;letter-spacing:0.262px;transform-origin:0 50%;transform:scaleX(1.06);-webkit-text-stroke-width:0;font-family:&quot;Noto Sans CJK SC&quot;,&quot;Liberation Sans&quot;,sans-serif;">shipping_cost</span>
<svg style="left:0;top:0" width="1581" height="1280" viewBox="0 0 1581 1280" font-family="Noto Sans CJK SC, Liberation Sans, sans-serif">
<path d="M597 502.7H969.6" stroke="#c2c2c2" stroke-width="1.3"/>
<text transform="translate(583.5 500.6) scale(1.01 1)" text-anchor="end" font-size="13.33" fill="#767676">0</text>
<path d="M597 472.8H969.6" stroke="#cfcfcf" stroke-width="1"/>
<text transform="translate(583.5 477.1) scale(1.01 1)" text-anchor="end" font-size="13.33" fill="#767676">5K</text>
<path d="M597 442.9H969.6" stroke="#cfcfcf" stroke-width="1"/>
<text transform="translate(583.5 447.2) scale(1.01 1)" text-anchor="end" font-size="13.33" fill="#767676">10K</text>
<path d="M597 413.1H969.6" stroke="#cfcfcf" stroke-width="1"/>
<text transform="translate(583.5 417.4) scale(1.01 1)" text-anchor="end" font-size="13.33" fill="#767676">15K</text>
<path d="M597 383.2H969.6" stroke="#cfcfcf" stroke-width="1"/>
<text transform="translate(583.5 387.5) scale(1.01 1)" text-anchor="end" font-size="13.33" fill="#767676">20K</text>
<path d="M597 353.3H969.6" stroke="#cfcfcf" stroke-width="1"/>
<text transform="translate(583.5 357.6) scale(1.01 1)" text-anchor="end" font-size="13.33" fill="#767676">25K</text>
<path d="M602.7 502.7v5.2M614.7 502.7v5.2M626.8 502.7v5.2M638.8 502.7v5.2M650.9 502.7v5.2M662.9 502.7v5.2M674.9 502.7v5.2M687.0 502.7v5.2M699.0 502.7v5.2M711.1 502.7v5.2M723.1 502.7v5.2M735.1 502.7v5.2M747.2 502.7v5.2M759.2 502.7v5.2M771.3 502.7v5.2M783.3 502.7v5.2M795.3 502.7v5.2M807.4 502.7v5.2M819.4 502.7v5.2M831.5 502.7v5.2M843.5 502.7v5.2M855.5 502.7v5.2M867.6 502.7v5.2M879.6 502.7v5.2M891.7 502.7v5.2M903.7 502.7v5.2M915.7 502.7v5.2M927.8 502.7v5.2M939.8 502.7v5.2M951.9 502.7v5.2M963.9 502.7v5.2" stroke="#c6c6c6" stroke-width="1"/>
<text transform="translate(544.6 468.8) rotate(-90)" font-size="13.33" fill="#767676" textLength="81.6" lengthAdjust="spacingAndGlyphs">shipping_cost</text>
<text x="758" y="609.6" font-size="13.33" fill="#767676" textLength="51" lengthAdjust="spacingAndGlyphs">province</text>
<text transform="translate(598.1 516.8) rotate(90)" font-family="Liberation Sans, sans-serif" font-size="13.3" fill="#808080">Start value</text>
<text transform="translate(622.2 516.8) rotate(90)" font-family="Liberation Sans, sans-serif" font-size="13.3" fill="#808080">Beijing</text>
<text transform="translate(646.3 516.8) rotate(90)" font-family="Liberation Sans, sans-serif" font-size="13.3" fill="#808080">Gansu</text>
<text transform="translate(670.3 516.8) rotate(90)" font-family="Liberation Sans, sans-serif" font-size="13.3" fill="#808080">Guangxi</text>
<text transform="translate(694.4 516.8) rotate(90)" font-family="Liberation Sans, sans-serif" font-size="13.3" fill="#808080">Hainan</text>
<text transform="translate(718.5 516.8) rotate(90)" font-family="Liberation Sans, sans-serif" font-size="13.3" fill="#808080">Heilongji …</text>
<text transform="translate(742.6 516.8) rotate(90)" font-family="Liberation Sans, sans-serif" font-size="13.3" fill="#808080">Hubei</text>
<text transform="translate(766.7 516.8) rotate(90)" font-family="Liberation Sans, sans-serif" font-size="13.3" fill="#808080">Jiangsu</text>
<text transform="translate(790.7 516.8) rotate(90)" font-family="Liberation Sans, sans-serif" font-size="13.3" fill="#808080">Jilin</text>
<text transform="translate(814.8 516.8) rotate(90)" font-family="Liberation Sans, sans-serif" font-size="13.3" fill="#808080">Neimenggu</text>
<text transform="translate(838.9 516.8) rotate(90)" font-family="Liberation Sans, sans-serif" font-size="13.3" fill="#808080">Qinghai</text>
<text transform="translate(863.0 516.8) rotate(90)" font-family="Liberation Sans, sans-serif" font-size="13.3" fill="#808080">Shanghai</text>
<text transform="translate(887.1 516.8) rotate(90)" font-family="Liberation Sans, sans-serif" font-size="13.3" fill="#808080">Sichuan</text>
<text transform="translate(911.1 516.8) rotate(90)" font-family="Liberation Sans, sans-serif" font-size="13.3" fill="#808080">Xicang</text>
<text transform="translate(935.2 516.8) rotate(90)" font-family="Liberation Sans, sans-serif" font-size="13.3" fill="#808080">Zhejiang</text>
<text transform="translate(959.3 516.8) rotate(90)" font-family="Liberation Sans, sans-serif" font-size="13.3" fill="#808080">Cumulati …</text>
<path d="M602.7 502.7H614.7M614.7 498.7H626.8M626.8 495.2H638.8M638.8 493.8H650.9M650.9 489.2H662.9M662.9 472.5H674.9M674.9 465.7H687.0M687.0 463.6H699.0M699.0 455.4H711.1M711.1 451.1H723.1M723.1 449.6H735.1M735.1 441.9H747.2M747.2 431.3H759.2M759.2 426.8H771.3M771.3 425.1H783.3M783.3 424.1H795.3M795.3 420.1H807.4M807.4 409.7H819.4M819.4 402.9H831.5M831.5 401.1H843.5M843.5 400.3H855.5M855.5 398.5H867.6M867.6 397.9H879.6M879.6 397.3H891.7M891.7 394.3H903.7M903.7 393.5H915.7M915.7 392.3H927.8M927.8 391.6H939.8M939.8 381.0H951.9M951.9 379.8H963.9" stroke="#7a7a7a" stroke-width="1" stroke-dasharray="2.7 2.7" fill="none"/>
<rect x="612.7" y="498.7" width="4" height="4.0" rx="2" fill="#fcd2d8"/>
<rect x="624.8" y="494.9" width="4" height="4.0" rx="2" fill="#fcd2d8"/>
<rect x="636.8" y="492.5" width="4" height="4.0" rx="2" fill="#fcd2d8"/>
<rect x="648.9" y="489.2" width="4" height="4.6" rx="2" fill="#fcd2d8"/>
<rect x="660.9" y="472.5" width="4" height="16.7" rx="2" fill="#fcd2d8"/>
<rect x="672.9" y="465.7" width="4" height="6.9" rx="2" fill="#fcd2d8"/>
<rect x="685.0" y="462.6" width="4" height="4.0" rx="2" fill="#fcd2d8"/>
<rect x="697.0" y="455.4" width="4" height="8.2" rx="2" fill="#fcd2d8"/>
<rect x="709.1" y="451.1" width="4" height="4.3" rx="2" fill="#fcd2d8"/>
<rect x="721.1" y="448.3" width="4" height="4.0" rx="2" fill="#fcd2d8"/>
<rect x="733.1" y="441.9" width="4" height="7.7" rx="2" fill="#f5475f"/>
<rect x="745.2" y="431.3" width="4" height="10.6" rx="2" fill="#fcd2d8"/>
<rect x="757.2" y="426.8" width="4" height="4.5" rx="2" fill="#fcd2d8"/>
<rect x="769.3" y="424.0" width="4" height="4.0" rx="2" fill="#fcd2d8"/>
<rect x="781.3" y="422.6" width="4" height="4.0" rx="2" fill="#fcd2d8"/>
<rect x="793.3" y="420.1" width="4" height="4.0" rx="2" fill="#fcd2d8"/>
<rect x="805.4" y="409.7" width="4" height="10.4" rx="2" fill="#fcd2d8"/>
<rect x="817.4" y="402.9" width="4" height="6.8" rx="2" fill="#fcd2d8"/>
<rect x="829.5" y="400.0" width="4" height="4.0" rx="2" fill="#fcd2d8"/>
<rect x="841.5" y="398.7" width="4" height="4.0" rx="2" fill="#fcd2d8"/>
<rect x="853.5" y="397.4" width="4" height="4.0" rx="2" fill="#fcd2d8"/>
<rect x="865.6" y="396.2" width="4" height="4.0" rx="2" fill="#fcd2d8"/>
<rect x="877.6" y="395.6" width="4" height="4.0" rx="2" fill="#fcd2d8"/>
<rect x="889.7" y="393.8" width="4" height="4.0" rx="2" fill="#fcd2d8"/>
<rect x="901.7" y="391.9" width="4" height="4.0" rx="2" fill="#fcd2d8"/>
<rect x="913.7" y="390.9" width="4" height="4.0" rx="2" fill="#fcd2d8"/>
<rect x="925.8" y="390.0" width="4" height="4.0" rx="2" fill="#fcd2d8"/>
<rect x="937.8" y="381.0" width="4" height="10.6" rx="2" fill="#fcd2d8"/>
<rect x="949.9" y="378.4" width="4" height="4.0" rx="2" fill="#fcd2d8"/>
<path d="M961.9 502.7V381.8a2.1 2.1 0 0 1 4.2 0V502.7z" fill="#c4d5fc"/>
<rect x="593.7" y="474" width="18" height="22" rx="4" fill="#000" opacity="0.035"/>
<rect x="592.6" y="471.2" width="44.2" height="24" rx="6" fill="#f5475f" opacity="0.1"/>
<rect x="604.7" y="467.7" width="44.2" height="24" rx="6" fill="#f5475f" opacity="0.1"/>
<rect x="616.7" y="466.3" width="44.2" height="24" rx="6" fill="#f5475f" opacity="0.1"/>
<rect x="628.8" y="461.7" width="44.2" height="24" rx="6" fill="#f5475f" opacity="0.1"/>
<rect x="633.5" y="445.0" width="58.8" height="24" rx="6" fill="#f5475f" opacity="0.1"/>
<rect x="645.5" y="438.2" width="58.8" height="24" rx="6" fill="#f5475f" opacity="0.1"/>
<rect x="664.9" y="436.1" width="44.2" height="24" rx="6" fill="#f5475f" opacity="0.1"/>
<rect x="669.6" y="427.9" width="58.8" height="24" rx="6" fill="#f5475f" opacity="0.1"/>
<rect x="689.0" y="423.6" width="44.2" height="24" rx="6" fill="#f5475f" opacity="0.1"/>
<rect x="701.0" y="422.1" width="44.2" height="24" rx="6" fill="#f5475f" opacity="0.1"/>
<rect x="705.7" y="414.4" width="58.8" height="24" rx="6" fill="#f5475f" opacity="0.1"/>
<rect x="717.8" y="403.8" width="58.8" height="24" rx="6" fill="#f5475f" opacity="0.1"/>
<rect x="737.1" y="399.3" width="44.2" height="24" rx="6" fill="#f5475f" opacity="0.1"/>
<rect x="749.2" y="397.6" width="44.2" height="24" rx="6" fill="#f5475f" opacity="0.1"/>
<rect x="761.2" y="396.6" width="44.2" height="24" rx="6" fill="#f5475f" opacity="0.1"/>
<rect x="773.2" y="392.6" width="44.2" height="24" rx="6" fill="#f5475f" opacity="0.1"/>
<rect x="778.0" y="382.2" width="58.8" height="24" rx="6" fill="#f5475f" opacity="0.1"/>
<rect x="790.0" y="375.4" width="58.8" height="24" rx="6" fill="#f5475f" opacity="0.1"/>
<rect x="809.4" y="373.6" width="44.2" height="24" rx="6" fill="#f5475f" opacity="0.1"/>
<rect x="821.4" y="372.8" width="44.2" height="24" rx="6" fill="#f5475f" opacity="0.1"/>
<rect x="833.4" y="371.0" width="44.2" height="24" rx="6" fill="#f5475f" opacity="0.1"/>
<rect x="845.5" y="370.4" width="44.2" height="24" rx="6" fill="#f5475f" opacity="0.1"/>
<rect x="861.2" y="369.8" width="36.9" height="24" rx="6" fill="#f5475f" opacity="0.1"/>
<rect x="869.6" y="366.8" width="44.2" height="24" rx="6" fill="#f5475f" opacity="0.1"/>
<rect x="881.6" y="366.0" width="44.2" height="24" rx="6" fill="#f5475f" opacity="0.1"/>
<rect x="893.6" y="364.8" width="44.2" height="24" rx="6" fill="#f5475f" opacity="0.1"/>
<rect x="905.7" y="364.1" width="44.2" height="24" rx="6" fill="#f5475f" opacity="0.1"/>
<rect x="910.4" y="353.5" width="58.8" height="24" rx="6" fill="#f5475f" opacity="0.1"/>
<rect x="929.8" y="352.3" width="44.2" height="24" rx="6" fill="#f5475f" opacity="0.1"/>
<rect x="939.9" y="350.5" width="48" height="23.5" rx="6" fill="#3f81fb" opacity="0.1"/>
<text transform="translate(602.7 490) scale(1.01 1)" text-anchor="middle" font-size="13.33" fill="#8c8c8c">0</text>
<text transform="translate(614.7 488.1) scale(1.01 1)" text-anchor="middle" font-size="13.33" fill="#f5475f">+664</text>
<text transform="translate(626.8 484.6) scale(1.01 1)" text-anchor="middle" font-size="13.33" fill="#f5475f">+599</text>
<text transform="translate(638.8 483.2) scale(1.01 1)" text-anchor="middle" font-size="13.33" fill="#f5475f">+219</text>
<text transform="translate(650.9 478.6) scale(1.01 1)" text-anchor="middle" font-size="13.33" fill="#f5475f">+777</text>
<text transform="translate(662.9 461.9) scale(1.01 1)" text-anchor="middle" font-size="13.33" fill="#f5475f">+2.79K</text>
<text transform="translate(674.9 455.1) scale(1.01 1)" text-anchor="middle" font-size="13.33" fill="#f5475f">+1.15K</text>
<text transform="translate(687.0 453.0) scale(1.01 1)" text-anchor="middle" font-size="13.33" fill="#f5475f">+350</text>
<text transform="translate(699.0 444.8) scale(1.01 1)" text-anchor="middle" font-size="13.33" fill="#f5475f">+1.37K</text>
<text transform="translate(711.1 440.5) scale(1.01 1)" text-anchor="middle" font-size="13.33" fill="#f5475f">+723</text>
<text transform="translate(723.1 439.0) scale(1.01 1)" text-anchor="middle" font-size="13.33" fill="#f5475f">+237</text>
<text transform="translate(735.1 431.3) scale(1.01 1)" text-anchor="middle" font-size="13.33" fill="#f5475f">+1.29K</text>
<text transform="translate(747.2 420.7) scale(1.01 1)" text-anchor="middle" font-size="13.33" fill="#f5475f">+1.78K</text>
<text transform="translate(759.2 416.2) scale(1.01 1)" text-anchor="middle" font-size="13.33" fill="#f5475f">+749</text>
<text transform="translate(771.3 414.5) scale(1.01 1)" text-anchor="middle" font-size="13.33" fill="#f5475f">+281</text>
<text transform="translate(783.3 413.5) scale(1.01 1)" text-anchor="middle" font-size="13.33" fill="#f5475f">+175</text>
<text transform="translate(795.3 409.5) scale(1.01 1)" text-anchor="middle" font-size="13.33" fill="#f5475f">+676</text>
<text transform="translate(807.4 399.1) scale(1.01 1)" text-anchor="middle" font-size="13.33" fill="#f5475f">+1.74K</text>
<text transform="translate(819.4 392.3) scale(1.01 1)" text-anchor="middle" font-size="13.33" fill="#f5475f">+1.13K</text>
<text transform="translate(831.5 390.5) scale(1.01 1)" text-anchor="middle" font-size="13.33" fill="#f5475f">+304</text>
<text transform="translate(843.5 389.7) scale(1.01 1)" text-anchor="middle" font-size="13.33" fill="#f5475f">+129</text>
<text transform="translate(855.5 387.9) scale(1.01 1)" text-anchor="middle" font-size="13.33" fill="#f5475f">+298</text>
<text transform="translate(867.6 387.3) scale(1.01 1)" text-anchor="middle" font-size="13.33" fill="#f5475f">+108</text>
<text transform="translate(879.6 386.7) scale(1.01 1)" text-anchor="middle" font-size="13.33" fill="#f5475f">+95</text>
<text transform="translate(891.7 383.7) scale(1.01 1)" text-anchor="middle" font-size="13.33" fill="#f5475f">+504</text>
<text transform="translate(903.7 382.9) scale(1.01 1)" text-anchor="middle" font-size="13.33" fill="#f5475f">+127</text>
<text transform="translate(915.7 381.7) scale(1.01 1)" text-anchor="middle" font-size="13.33" fill="#f5475f">+201</text>
<text transform="translate(927.8 381.0) scale(1.01 1)" text-anchor="middle" font-size="13.33" fill="#f5475f">+121</text>
<text transform="translate(939.8 370.4) scale(1.01 1)" text-anchor="middle" font-size="13.33" fill="#f5475f">+1.78K</text>
<text transform="translate(951.9 369.2) scale(1.01 1)" text-anchor="middle" font-size="13.33" fill="#f5475f">+203</text>
<text transform="translate(964.3 367) scale(1.01 1)" text-anchor="middle" font-size="13.33" fill="#4a86f7">20.6K</text>
</svg>
<div class="a" style="left:645px;top:226px;width:353px;height:118px;border-radius:5px;background:#fff"></div>
<div class="a" style="left:660.2px;top:245.2px;width:9.6px;height:9.6px;border-radius:1.6px;background:#f5475f"></div>
<span class="t" style="left:678.5px;top:239.2px;font-size:16px;line-height:22px;color:#1f1f1f;font-weight:700;-webkit-text-stroke-width:0;letter-spacing:-0.023px;-webkit-text-stroke-width:0;font-family:&quot;Noto Sans CJK SC&quot;,&quot;Liberation Sans&quot;,sans-serif;">Henan</span>
<span class="t" style="left:656.7px;top:271.8px;font-size:16px;line-height:22px;color:#4d4d4d;letter-spacing:0.061px;transform-origin:0 50%;transform:scaleX(1.055);-webkit-text-stroke-width:0;font-family:&quot;Noto Sans CJK SC&quot;,&quot;Liberation Sans&quot;,sans-serif;">shipping_costIncreased value</span>
<span class="t" style="left:924px;top:271.8px;font-size:16px;line-height:22px;color:#1f1f1f;letter-spacing:0.116px;transform-origin:0 50%;transform:scaleX(1.12);-webkit-text-stroke-width:0;font-family:&quot;Noto Sans CJK SC&quot;,&quot;Liberation Sans&quot;,sans-serif;">+1.29K</span>
<span class="t" style="left:656.7px;top:306.4px;font-size:16px;line-height:22px;color:#4d4d4d;letter-spacing:0.028px;transform-origin:0 50%;transform:scaleX(1.055);-webkit-text-stroke-width:0;font-family:&quot;Noto Sans CJK SC&quot;,&quot;Liberation Sans&quot;,sans-serif;">shipping_cost</span>
<span class="t" style="left:935px;top:306.4px;font-size:16px;line-height:22px;color:#1f1f1f;letter-spacing:0.095px;transform-origin:0 50%;transform:scaleX(1.1);-webkit-text-stroke-width:0;font-family:&quot;Noto Sans CJK SC&quot;,&quot;Liberation Sans&quot;,sans-serif;">10.2K</span>
<div class="a" style="left:642px;top:224px;width:352.5px;height:120px;border:4.2px solid #f9584a"></div>
<svg style="left:746px;top:413px;filter:drop-shadow(0 1.5px 1.5px rgba(0,0,0,.35))" width="40" height="40" viewBox="746 413 40 40"><path fill="#fff" stroke="#111" stroke-width="1.7" stroke-linejoin="round" d="M757.5 420.6C757.2 417.3 762 417 762.4 420.2L763.5 426.6C764.6 424.5 768 424.4 768.7 426.7C769.9 425 773.6 425.2 774.3 427.5C775.7 426.3 779.2 427 780.4 428.8C781.7 430.4 781.6 433 781.3 435.8C780.8 440.4 777.4 444.2 776.3 448.6L771.2 445.8L767.2 448.6H761.7C759.6 444 754.5 438.2 751.7 433.8C750.4 431.6 752.3 429.5 754.3 430.6L759.5 433.8Z"/><path stroke="#111" stroke-width="1.3" d="M766.2 435.8V442.6M770.3 435.8V442.6M774.4 435.8V442.6"/><path stroke="#111" stroke-width="1.5" stroke-linecap="round" fill="none" d="M763.6 426.4V430.4M768.8 426.6V430.6M774.4 427.4V430.8"/></svg>
</body></html>
